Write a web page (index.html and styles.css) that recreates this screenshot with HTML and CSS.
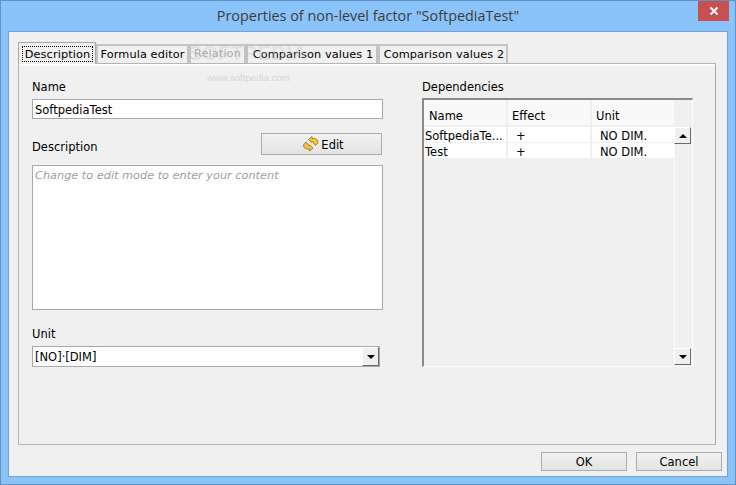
FILE: index.html
```html
<!DOCTYPE html>
<html lang="en">
<head>
    <meta charset="UTF-8">
    <title>Properties of non-level factor "SoftpediaTest"</title>
    <link rel="stylesheet" href="styles.css">
</head>
<body>
    <div class="window">
        <!-- Title bar -->
        <div class="titlebar">
            <span class="title">Properties of non-level factor "SoftpediaTest"</span>
            <div class="close">
                <svg width="10" height="10" viewBox="0 0 10 10"><path d="M1.5 1.5 L8.5 8.5 M8.5 1.5 L1.5 8.5" stroke="#fff" stroke-width="2"/></svg>
            </div>
        </div>

        <div class="client">
            <!-- Tabs -->
            <div class="tabs">
                <div class="tab tab-active"><span class="focus">Description</span></div>
                <div class="tab tab-formula">Formula editor</div>
                <div class="tab tab-relation">Relation</div>
                <div class="tab tab-comp1">Comparison values 1</div>
                <div class="tab tab-comp2">Comparison values 2</div>
            </div>

            <div class="pane">
                <div class="watermark-big">SOFTPEDIA</div>
                <div class="watermark">www.softpedia.com</div>

                <!-- Left column -->
                <div class="left">
                    <div class="label name-label">Name</div>
                    <div class="input">SoftpediaTest</div>
                    <div class="desc-row">
                        <div class="label">Description</div>
                        <div class="btn edit-btn">
                            <svg width="16" height="16" viewBox="0 0 16 16">
                                <g fill="#f3c64a" stroke="#b47a12">
                                    <path d="M5.5 3.5 L9 .5 V2.5 H11 C13.5 2.5 15 4.5 15 6.5 L12.5 9.5 L10.5 7 C10.5 6 10 5.5 9 5.5 V6.5 Z"/>
                                    <path d="M5.5 3.5 L9 .5 V2.5 H11 C13.5 2.5 15 4.5 15 6.5 L12.5 9.5 L10.5 7 C10.5 6 10 5.5 9 5.5 V6.5 Z" transform="rotate(180 7.75 7.75)"/>
                                </g>
                            </svg>
                            <span class="edit-text">Edit</span>
                        </div>
                    </div>
                    <div class="textarea">Change to edit mode to enter your content</div>
                    <div class="label unit-label">Unit</div>
                    <div class="combo">
                        <span class="combo-text">[NO]·[DIM]</span>
                        <div class="arrow-btn"><span class="arrow-down"></span></div>
                    </div>
                </div>

                <!-- Right column -->
                <div class="right">
                    <div class="label dep-label">Dependencies</div>
                    <div class="table">
                        <div class="table-main">
                            <div class="row head">
                                <div class="cell c-name">Name</div>
                                <div class="cell c-effect">Effect</div>
                                <div class="cell c-unit">Unit</div>
                            </div>
                            <div class="row">
                                <div class="cell c-name">SoftpediaTe...</div>
                                <div class="cell c-effect">+</div>
                                <div class="cell c-unit">NO DIM.</div>
                            </div>
                            <div class="row">
                                <div class="cell c-name">Test</div>
                                <div class="cell c-effect">+</div>
                                <div class="cell c-unit">NO DIM.</div>
                            </div>
                        </div>
                        <div class="scrollbar">
                            <div class="arrow-btn sb-btn"><span class="arrow-up"></span></div>
                            <div class="arrow-btn sb-btn"><span class="arrow-down"></span></div>
                        </div>
                    </div>
                </div>
            </div>

            <!-- Bottom buttons -->
            <div class="footer">
                <div class="btn foot-btn">OK</div>
                <div class="btn foot-btn">Cancel</div>
            </div>
        </div>
    </div>
</body>
</html>
```

FILE: styles.css
```css
body {
    margin: 0;
    width: 736px;
    height: 485px;
    overflow: hidden;
    font-family: 'DejaVu Sans', sans-serif;
    font-size: 11.5px;
    color: #000;
}
.window {
    box-sizing: border-box;
    width: 736px;
    height: 485px;
    display: flex;
    flex-direction: column;
    background: #8ac3fa;
    border: 1px solid #5f93c8;
    padding: 0 7px 7px 7px;
}
.titlebar {
    height: 30px;
    flex: none;
    display: flex;
    justify-content: center;
    position: relative;
}
.title {
    font-family: 'Open Sans', sans-serif;
    font-size: 14.4px;
    line-height: 30px;
    color: #3c3c3c;
}
.close {
    position: absolute;
    top: 0;
    right: -1px;
    width: 31px;
    height: 20px;
    background: #c75050;
    display: flex;
    align-items: center;
    justify-content: center;
}
.client {
    flex: 1;
    background: #f0f0f0;
    border: 1px solid #6fa3d8;
    padding: 10px 5px 5px 9px;
    display: flex;
    flex-direction: column;
}

/* tabs */
.tabs {
    display: flex;
    height: 21px;
    flex: none;
    font-size: 11.3px;
}
.tab {
    box-sizing: border-box;
    margin-top: 2px;
    height: 19px;
    border: 2px solid #c4c4c4;
    border-bottom: 0;
    line-height: 18px;
    text-align: center;
    letter-spacing: 0.1px;
}
.tab-active {
    width: 78px;
    margin-top: 0;
    height: 22px;
    border: 1px solid #a9a9a9;
    border-bottom: 0;
    background: #f0f0f0;
    padding: 3px 2px 0 2px;
    position: relative;
    z-index: 1;
}
.focus {
    display: block;
    border: 1px dotted #000;
    line-height: 16px;
    height: 16px;
    margin-left: 1px;
    box-sizing: border-box;
}
.tab-formula { width: 93px; }
.tab-relation { width: 57px; color: #a8a8a8; line-height: 16px; }
.tab-comp1 { width: 132px; padding-left: 2px; }
.tab-comp2 { width: 130px; padding-left: 2px; }

.pane {
    flex: 1;
    position: relative;
    display: flex;
    margin-right: 6px;
    border: 1px solid #b4b4b4;
    border-right-color: #a8a8a8;
    box-shadow: inset 0 2px 0 #fbfbfb;
    padding: 0 0 0 13px;
}
.watermark {
    position: absolute;
    left: 188px;
    top: 8px;
    color: #d6d6d6;
    font-family: 'Liberation Sans', sans-serif;
    font-size: 9.6px;
}
.watermark-big {
    position: absolute;
    left: 169px;
    top: -23px;
    color: rgba(190, 190, 190, 0.3);
    font-family: 'Liberation Sans', sans-serif;
    font-size: 20.5px;
    font-weight: bold;
    letter-spacing: 0.2px;
}
.label { line-height: 16px; }
.left {
    width: 351px;
    display: flex;
    flex-direction: column;
}
.name-label { margin-top: 15px; }
.input {
    box-sizing: border-box;
    height: 20px;
    margin-top: 4px;
    background: #fff;
    border: 1px solid #a9a9a9;
    line-height: 20px;
    padding-left: 2px;
}
.desc-row {
    display: flex;
    justify-content: space-between;
    margin-top: 14px;
    height: 32px;
}
.desc-row .label { margin-top: 6px; }
.btn {
    box-sizing: border-box;
    border: 1px solid #ababab;
    background: linear-gradient(#f2f2f2, #e3e3e3);
    display: flex;
    align-items: center;
    justify-content: center;
}
.edit-btn {
    width: 121px;
    height: 22px;
    margin-right: 1px;
    padding-left: 4px;
    gap: 2px;
}
.edit-text { padding-top: 2px; }
.textarea {
    box-sizing: border-box;
    height: 145px;
    background: #fff;
    border: 1px solid #a9a9a9;
    padding: 1px 2px;
    font-size: 11.3px;
    line-height: 18px;
    font-style: italic;
    color: #a0a0a0;
}
.unit-label { margin-top: 16px; }
.combo {
    box-sizing: border-box;
    width: 348px;
    height: 21px;
    margin-top: 4px;
    background: #fff;
    border: 1px solid #a9a9b2;
    display: flex;
    justify-content: space-between;
    padding-left: 2px;
    line-height: 20px;
}
.arrow-btn {
    box-sizing: border-box;
    width: 17px;
    background: #f0f0f0;
    border: 1px solid;
    border-color: #fff #696969 #696969 #fff;
    display: flex;
    align-items: center;
    justify-content: center;
}
.arrow-down, .arrow-up {
    width: 0;
    height: 0;
    border-left: 4px solid transparent;
    border-right: 4px solid transparent;
}
.arrow-down { border-top: 4px solid #000; }
.arrow-up { border-bottom: 4px solid #000; }

.right {
    margin-left: 39px;
    display: flex;
    flex-direction: column;
}
.dep-label { margin-top: 15px; }
.table {
    box-sizing: border-box;
    width: 271px;
    height: 269px;
    margin-top: 3px;
    display: flex;
    border: 2px solid;
    border-color: #8a8a8a #fbfbfb #fbfbfb #8a8a8a;
    border-right-width: 1px;
    border-bottom-width: 1px;
}
.table-main { width: 250px; }
.row {
    display: flex;
    gap: 2px;
    height: 15px;
    margin-bottom: 1px;
}
.head {
    height: 25px;
    margin-bottom: 2px;
}
.cell {
    background: #fff;
    line-height: 18px;
    white-space: nowrap;
    overflow: hidden;
}
.c-name { width: 82px; padding-left: 1px; box-sizing: border-box; }
.c-effect { width: 82px; padding-left: 8px; box-sizing: border-box; }
.c-unit { width: 82px; padding-left: 8px; box-sizing: border-box; }
.head .cell {
    background: #f9f9f9;
    line-height: 32px;
}
.head .c-name { padding-left: 5px; }
.head .c-effect { padding-left: 4px; }
.head .c-unit { padding-left: 4px; }
.scrollbar {
    box-sizing: border-box;
    width: 18px;
    margin-top: 27px;
    padding-bottom: 1px;
    box-shadow: inset 1px 0 0 #fbfbfb;
    display: flex;
    flex-direction: column;
    justify-content: space-between;
}
.sb-btn { height: 17px; }

.footer {
    display: flex;
    justify-content: flex-end;
    gap: 9px;
    margin-top: 7px;
}
.foot-btn {
    width: 86px;
    height: 19px;
}
```
